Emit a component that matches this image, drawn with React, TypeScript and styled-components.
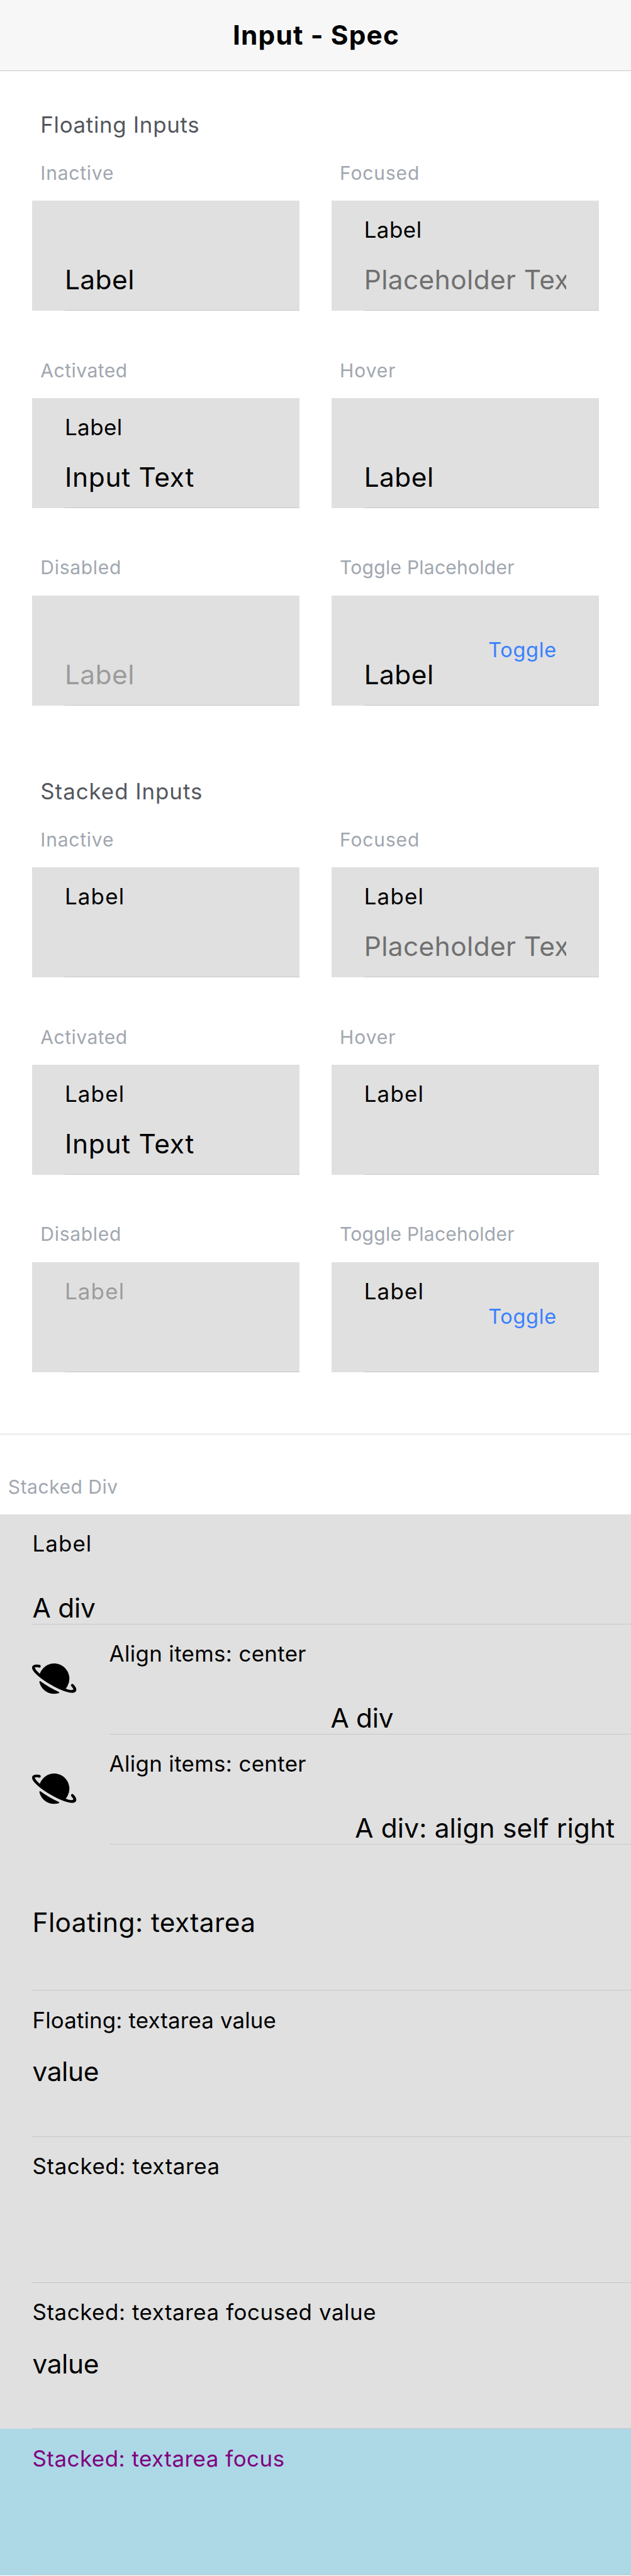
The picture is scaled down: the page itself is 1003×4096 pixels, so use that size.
import React from 'react';
import styled, { createGlobalStyle } from 'styled-components';
import { IoPlanet } from 'react-icons/io5';

/* Design units (3 per CSS pixel) scaled to the page */
const u = (n: number) => `${(n * 0.8576).toFixed(2)}px`;
const w = (n: number) => `${(n * 0.85726).toFixed(2)}px`;

const colors = {
  item: '#e0e0e0',
  line: '#c8c8c8',
  heading: '#54575e',
  caption: '#a1a7b0',
  primary: '#3880ff',
};

const GlobalStyle = createGlobalStyle`
  *, *::before, *::after { box-sizing: border-box; }
  body {
    margin: 0;
    background: #fff;
    color: #000;
    font-family: Inter, "Liberation Sans", sans-serif;
  }
`;

type Tracked = { $track?: number };

const Page = styled.div`
  width: 1003px;
  height: 4096px;
  overflow: hidden;
  display: flex;
  flex-direction: column;
`;

const Header = styled.header`
  flex: none;
  height: ${u(132)};
  display: flex;
  align-items: center;
  justify-content: center;
  background: #f7f7f7;
  border-bottom: 1px solid ${colors.line};
`;

const Title = styled.h1`
  margin: 0;
  padding-left: 2px;
  font-size: ${u(49.5)};
  line-height: ${u(61)};
  font-weight: 700;
  letter-spacing: 1.1px;
`;

const Section = styled.section`
  flex: none;
  padding: 0 ${w(60)};
`;

const Heading = styled.h2<{ $height: number } & Tracked>`
  margin: 0;
  height: ${(p) => u(p.$height)};
  padding: 0 0 ${u(14.5)} ${w(15)};
  display: flex;
  align-items: flex-end;
  font-size: ${u(40.7)};
  line-height: ${u(60)};
  font-weight: 400;
  letter-spacing: ${(p) => p.$track ?? 0}px;
  color: ${colors.heading};
`;

const Grid = styled.div`
  display: grid;
  grid-template-columns: repeat(2, minmax(0, 1fr));
  column-gap: ${w(60)};
  row-gap: ${u(66)};
`;

const Caption = styled.h3<Tracked>`
  flex: none;
  margin: 0;
  height: ${u(96)};
  padding: ${u(19.9)} 0 0 ${w(15)};
  font-size: ${u(35)};
  line-height: ${u(50)};
  font-weight: 400;
  letter-spacing: ${(p) => p.$track ?? 0}px;
  color: ${colors.caption};
`;

const Item = styled.div<{ $height?: number; $focus?: boolean }>`
  flex: none;
  position: relative;
  height: ${(p) => u(p.$height ?? 204)};
  padding-left: ${w(60)};
  display: flex;
  background: ${(p) => (p.$focus ? 'lightblue' : colors.item)};
  color: ${(p) => (p.$focus ? 'purple' : '#000')};
`;

const Inner = styled.div`
  flex: 1;
  min-width: 0;
  padding-top: ${u(33.2)};
  display: flex;
  flex-direction: column;
  border-bottom: 1px solid ${colors.line};
`;

const Label = styled.div<{ $muted?: boolean } & Tracked>`
  flex: none;
  font-size: ${u(40.7)};
  line-height: ${u(42)};
  letter-spacing: ${(p) => p.$track ?? 0.57}px;
  white-space: nowrap;
  opacity: ${(p) => (p.$muted ? 0.3 : 1)};
`;

/* Floating label resting over the empty control */
const RestingLabel = styled(Label)<{ $top?: number }>`
  margin-top: ${(p) => u(p.$top ?? 83.8)};
  font-size: ${u(49.5)};
  line-height: ${u(60)};
`;

const Value = styled.div<{ $placeholder?: boolean; $top?: number; $align?: string } & Tracked>`
  flex: none;
  align-self: ${(p) => p.$align ?? 'stretch'};
  margin-top: ${(p) => u(p.$top ?? 41.1)};
  margin-right: ${(p) => w(p.$align ? 30 : 60)};
  overflow: hidden;
  font-size: ${u(49.5)};
  line-height: ${u(60)};
  letter-spacing: ${(p) => p.$track ?? 0}px;
  white-space: nowrap;
  color: ${(p) => (p.$placeholder ? '#707070' : '#000')};
`;

const Toggle = styled.button`
  position: absolute;
  top: ${u(77.3)};
  left: ${w(290.5)};
  padding: 0;
  border: 0;
  background: none;
  font-family: inherit;
  font-size: ${u(37.9)};
  line-height: ${u(50)};
  letter-spacing: 0.66px;
  color: ${colors.primary};
`;

const Divider = styled.hr`
  flex: none;
  width: 100%;
  height: ${u(3)};
  margin: ${u(114)} 0 ${u(51)};
  border: 0;
  background: #eff0f2;
`;

const List = styled.div`
  flex: none;
  display: flex;
  flex-direction: column;
`;

const IconSlot = styled.div`
  flex: none;
  width: ${w(142.5)};
  padding-top: ${u(60)};
  svg {
    display: block;
    width: ${u(82)};
    height: ${u(82)};
  }
`;

type CellProps = {
  name: string;
  track: number;
  kind: 'floating' | 'stacked';
  value?: string;
  valueTrack?: number;
  placeholder?: boolean;
  disabled?: boolean;
  toggle?: boolean;
};

function Cell({ name, track, kind, value, valueTrack, placeholder, disabled, toggle }: CellProps) {
  const resting = kind === 'floating' && !value;
  return (
    <div>
      <Caption $track={track}>{name}</Caption>
      <Item>
        <Inner>
          {resting ? (
            <RestingLabel $track={0.44} $muted={disabled}>Label</RestingLabel>
          ) : (
            <Label $track={kind === 'floating' ? 0.49 : 1.2} $muted={disabled}>Label</Label>
          )}
          {value && <Value $placeholder={placeholder} $track={valueTrack}>{value}</Value>}
        </Inner>
        {toggle && <Toggle>Toggle</Toggle>}
      </Item>
    </div>
  );
}

function States({ kind }: { kind: 'floating' | 'stacked' }) {
  return (
    <Grid>
      <Cell name="Inactive" track={0.78} kind={kind} />
      <Cell name="Focused" track={0.85} kind={kind} value="Placeholder Text" valueTrack={0.37} placeholder />
      <Cell name="Activated" track={0.5} kind={kind} value="Input Text" valueTrack={0.7} />
      <Cell name="Hover" track={0.92} kind={kind} />
      <Cell name="Disabled" track={0.71} kind={kind} disabled />
      <Cell name="Toggle Placeholder" track={0.25} kind={kind} toggle />
    </Grid>
  );
}

export default function App() {
  return (
    <>
      <GlobalStyle />
      <Page>
        <Header>
          <Title>Input - Spec</Title>
        </Header>
        <Section>
          <Heading $height={144} $track={0.66}>Floating Inputs</Heading>
          <States kind="floating" />
        </Section>
        <Section>
          <Heading $height={204} $track={0.94}>Stacked Inputs</Heading>
          <States kind="stacked" />
        </Section>
        <Divider />
        <Caption $track={0.51}>Stacked Div</Caption>
        <List>
          <Item>
            <Inner>
              <Label $track={1.1}>Label</Label>
              <Value $top={68.1} $track={-0.25}>A div</Value>
            </Inner>
          </Item>
          <Item>
            <IconSlot><IoPlanet /></IconSlot>
            <Inner>
              <Label $track={0.33}>Align items: center</Label>
              <Value $top={68.1} $track={-0.25} $align="center">A div</Value>
            </Inner>
          </Item>
          <Item>
            <IconSlot><IoPlanet /></IconSlot>
            <Inner>
              <Label $track={0.33}>Align items: center</Label>
              <Value $top={68.1} $track={0.14} $align="flex-end">A div: align self right</Value>
            </Inner>
          </Item>
          <Item $height={271}>
            <Inner>
              <RestingLabel $top={80.8} $track={0.4}>Floating: textarea</RestingLabel>
            </Inner>
          </Item>
          <Item $height={271}>
            <Inner>
              <Label $track={0.14}>Floating: textarea value</Label>
              <Value $top={44.8} $track={-0.4}>value</Value>
            </Inner>
          </Item>
          <Item $height={271}>
            <Inner>
              <Label $track={0.62}>Stacked: textarea</Label>
            </Inner>
          </Item>
          <Item $height={271}>
            <Inner>
              <Label $track={0.56}>Stacked: textarea focused value</Label>
              <Value $top={44.8} $track={-0.4}>value</Value>
            </Inner>
          </Item>
          <Item $height={271} $focus>
            <Inner>
              <Label $track={0.51}>Stacked: textarea focus</Label>
            </Inner>
          </Item>
        </List>
      </Page>
    </>
  );
}
